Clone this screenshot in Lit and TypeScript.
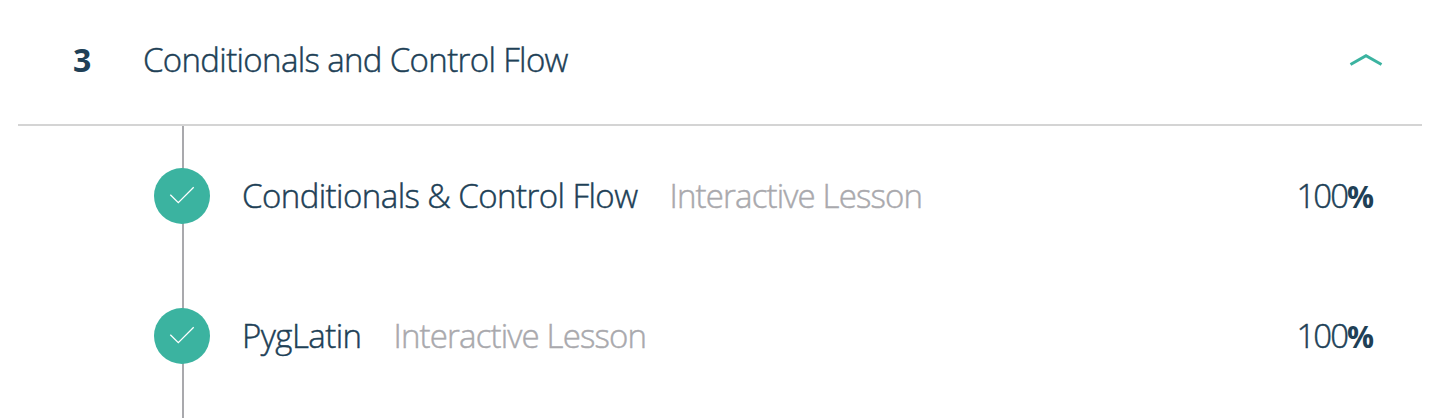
import { LitElement, html, css } from "lit";
import { customElement, property } from "lit/decorators.js";

@customElement("lesson-row")
class LessonRow extends LitElement {
  @property() name = "";
  @property() kind = "";
  @property() amount = "";

  static styles = css`
    :host { display: flex; align-items: center; height: 140px; padding: 0 66px 0 154px; }
    .badge { position: relative; flex: none; width: 56px; height: 56px; border-radius: 50%; background: #3bb3a0; }
    .badge svg { display: block; }
    .name { margin-left: 32px; letter-spacing: -0.56px; color: #204056; -webkit-text-stroke: 0.45px; }
    .kind { margin-left: 32px; letter-spacing: -0.85px; color: #a9a9ad; -webkit-text-stroke: 0.45px; }
    .amount { margin-left: auto; color: #204056; letter-spacing: -2px; -webkit-text-stroke: 0.45px; }
    .amount b { font-weight: 700; font-size: 30px; letter-spacing: 0; -webkit-text-stroke: 0; }
  `;

  render() {
    return html`
      <span class="badge"><svg width="56" height="56" viewBox="0 0 56 56" fill="none" stroke="#fff" stroke-width="1.3"><path d="M16.3 26.8 24.3 34.7 39.7 19.3" /></svg></span>
      <span class="name">${this.name}</span>
      <span class="kind">${this.kind}</span>
      <span class="amount">${this.amount}<b>%</b></span>
    `;
  }
}

@customElement("app-root")
class AppRoot extends LitElement {
  private lessons = [
    { name: "Conditionals & Control Flow", kind: "Interactive Lesson", amount: "100" },
    { name: "PygLatin", kind: "Interactive Lesson", amount: "100" },
  ];

  static styles = css`
    :host { display: block; height: 418px; overflow: hidden; background: #fff; font: 300 33px/44px "Open Sans", "Noto Sans", sans-serif; white-space: nowrap; }
    .head { display: flex; align-items: center; box-sizing: border-box; height: 126px; margin: 0 18px; padding: 0 39px 4px 55px; border-bottom: 2px solid #d4d4d4; color: #204056; }
    .number { width: 70px; font-weight: 700; font-size: 32px; }
    .title { letter-spacing: -0.65px; -webkit-text-stroke: 0.45px; }
    .chevron { display: block; margin-left: auto; }
    .list { box-sizing: border-box; height: 292px; background: linear-gradient(#a9a9ad, #a9a9ad) 182px 0 / 2px 100% no-repeat; }
  `;

  render() {
    return html`
      <div class="head">
        <span class="number">3</span>
        <span class="title">Conditionals and Control Flow</span>
        <svg class="chevron" width="34" height="14" viewBox="0 0 34 14" fill="none" stroke="#3bb3a0" stroke-width="3"><path d="M1.5 11.5 17 2.7 32.5 11.5" /></svg>
      </div>
      <div class="list">
        ${this.lessons.map((l) => html`<lesson-row .name=${l.name} .kind=${l.kind} .amount=${l.amount}></lesson-row>`)}
      </div>
    `;
  }
}
